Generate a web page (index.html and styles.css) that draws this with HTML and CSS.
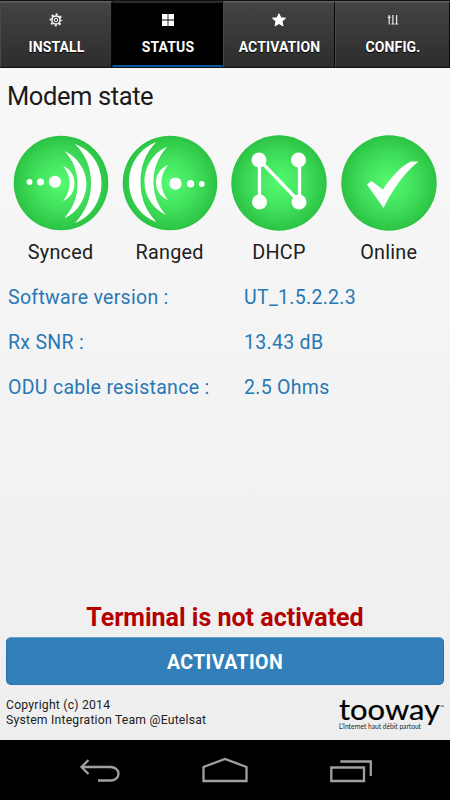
FILE: index.html
```html
<!DOCTYPE html>
<html lang="en">
<head>
<meta charset="utf-8">
<title>Modem status</title>
<link rel="stylesheet" href="styles.css">
</head>
<body>
<div class="app">
  <nav class="tabs">
    <a class="tab">
      <svg class="tab-icon" viewBox="0 0 14 14"><g fill="none" stroke="#fff"><circle cx="7" cy="7" r="4.1" stroke-width="1.5"/><circle cx="7" cy="7" r="5.6" stroke-width="1.6" stroke-dasharray="2 2.398" stroke-dashoffset="1"/><circle cx="7" cy="7" r="1.7" stroke-width="1"/></g></svg>
      <span>INSTALL</span>
    </a>
    <a class="tab active">
      <svg class="tab-icon" viewBox="0 0 14 14"><path fill="#fff" d="M1 1h5.600v5.600H1zM7.400 1H13v5.600H7.400zM1 7.400h5.600V13H1zM7.400 7.400H13V13H7.400z"/></svg>
      <span>STATUS</span>
    </a>
    <a class="tab">
      <svg class="tab-icon" viewBox="0 0 14 14"><path fill="#fff" stroke="#fff" stroke-linejoin="round" d="M7 .7l1.8 4.1 4.7.4-3.5 3.1 1 4.6L7 10.5l-4 2.400 1-4.600L.5 5.200l4.700-.4z"/></svg>
      <span>ACTIVATION</span>
    </a>
    <a class="tab">
      <svg class="tab-icon" viewBox="0 0 14 14"><path fill="none" stroke="#e8e8e8" stroke-width="1.2" d="M3.2 2v9.500M6.900 2v9.500M10.600 2v9.500M1.700 4.300h3M5.400 11h3M9.100 11h3"/></svg>
      <span>CONFIG.</span>
    </a>
  </nav>
  <main class="content">
    <h1>Modem state</h1>
    <div class="states">
      <div class="state">
        <svg viewBox="0 0 96 96">
          <defs><radialGradient id="green"><stop offset="0" stop-color="#54fb70"/><stop offset=".55" stop-color="#41e05c"/><stop offset="1" stop-color="#2cc344"/></radialGradient></defs>
          <circle cx="48" cy="48" r="47.3" fill="url(#green)"/>
          <g fill="#fff"><circle cx="16.500" cy="47" r="2.900"/><circle cx="27.500" cy="47" r="3.600"/><circle cx="42" cy="46.800" r="6.100"/>
          <path d="M50 31C57 34 61.500 40 61.500 48C61.500 57 57 63 50 66C54 61 56.500 55 56.500 48C56.500 41 54 36 50 31z"/>
          <path d="M51.500 16C64 22 73 34 73.500 49C73 64 64 78 51.500 83C60 73 64.500 62 64.500 49C64.500 36 60 25 51.500 16z"/>
          <path d="M62 9C78 15 88.500 30 88.500 48C88.500 66 78 82 62 88C73 76 78 63 78 48C78 33 73 20 62 9z"/></g>
        </svg>
        <span>Synced</span>
      </div>
      <div class="state">
        <svg viewBox="0 0 96 96">
          <circle cx="48" cy="48" r="47.300" fill="url(#green)"/>
          <g fill="#fff"><circle cx="79.700" cy="49" r="2.900"/><circle cx="68.500" cy="48.700" r="3.700"/><circle cx="53.500" cy="48.700" r="6.200"/>
          <path d="M46 30C39 33 34 39 34 47.500C34 56 39 62 46 65C42 60 39.500 54 39.500 47.500C39.500 41 42 35 46 30z"/>
          <path d="M45 12C32 17 22.500 31 22.500 47C22.500 62 32 74 44 80C35 70 31.500 59 31.500 46C31.500 34 36 22 45 12z"/>
          <path d="M34.500 7C18 13 7 29 7 47C7 65 18 81 34.500 87C23 75 18.500 62 18.500 47C18.500 32 23 18 34.500 7z"/></g>
        </svg>
        <span>Ranged</span>
      </div>
      <div class="state">
        <svg viewBox="0 0 96 96"><circle cx="48" cy="48" r="47.700" fill="url(#green)"/><path d="M28.500 67V25L68.500 67V25" fill="none" stroke="#fff" stroke-width="3.300"/><g fill="#fff"><circle cx="28" cy="25" r="7.500"/><circle cx="67.500" cy="25" r="7.500"/><circle cx="28.500" cy="67" r="7.500"/><circle cx="68" cy="67" r="7.500"/></g></svg>
        <span>DHCP</span>
      </div>
      <div class="state">
        <svg viewBox="0 0 96 96"><circle cx="48" cy="48" r="47.700" fill="url(#green)"/><path d="M26 49.500L30.500 46L42 54.500C51 41 60 31 70 26.500H77.500C63 38 52 54 42.500 73z" fill="#fff"/></svg>
        <span>Online</span>
      </div>
    </div>
    <dl class="readings">
      <dt>Software version :</dt><dd>UT_1.5.2.2.3</dd>
      <dt>Rx SNR :</dt><dd>13.43 dB</dd>
      <dt>ODU cable resistance :</dt><dd>2.5 Ohms</dd>
    </dl>
    <div class="bottom">
      <p class="warning">Terminal is not activated</p>
      <button class="activate">ACTIVATION</button>
      <footer>
        <p class="copyright">Copyright (c) 2014<br>System Integration Team @Eutelsat</p>
        <svg class="logo" viewBox="0 0 108 36">
          <text class="brand" x="1" y="22.500" textLength="101" lengthAdjust="spacingAndGlyphs">tooway</text>
          <text class="tagline" x="1" y="31.800" textLength="82" lengthAdjust="spacingAndGlyphs">L'Internet haut débit partout</text>
          <text class="tm" x="102" y="12" textLength="4" lengthAdjust="spacingAndGlyphs">™</text>
        </svg>
      </footer>
    </div>
  </main>
  <div class="navbar">
    <svg viewBox="0 0 46 26"><path d="M12.500 3L5.500 10l7 7M5.500 10h29c4.500 0 8 3 8 6.800s-3.500 6.700-8 6.700H22"/></svg>
    <svg viewBox="0 0 46 26"><path d="M1.500 24V10L23 2l21.500 8v14z"/></svg>
    <svg viewBox="0 0 46 26"><path d="M3.300 10.500H36V24H3.300zM12.300 4.500h30.500v14.500"/></svg>
  </div>
</div>
</body>
</html>
```
FILE: styles.css
```css
* { box-sizing: border-box; }
body { margin: 0; font-family: Roboto, "Liberation Sans", sans-serif; }
p, h1, dl, dd { margin: 0; }
svg { display: block; }
.app { width: 450px; height: 800px; display: flex; flex-direction: column; background: linear-gradient(#f9f9f9, #eee 740px); }
.tabs { height: 68px; flex: none; display: grid; grid-template-columns: 112px 111px 112px 115px; background: #111; padding-top: 1px; }
.tab { display: flex; flex-direction: column; align-items: center; padding-top: 10px; height: 66px; color: #fff; font-size: 14px; font-weight: 700; text-shadow: 0 1px 1px #000; background: linear-gradient(#434343, #2d2d2d); border-top: 2px solid #585858; border-right: 1px solid #080808; border-left: 1px solid #484848; }
.tab.active { background: #000; border-color: #2c2c2c #000 #075a9f; border-bottom: 2px solid #075a9f; }
.tab-icon { width: 14px; height: 14px; }
.tab span { margin-top: 10px; padding-left: 1px; line-height: 20px; letter-spacing: .1px; white-space: nowrap; }
.content { flex: 1; display: flex; flex-direction: column; padding: 10px 6px 0; }
h1 { font-size: 25.5px; font-weight: 400; line-height: 36px; color: #1b1b1b; letter-spacing: -.4px; padding-left: 1px; }
.states { display: grid; grid-template-columns: 109.200px 109px 109.500px 110px; margin-top: 21px; }
.state { display: flex; flex-direction: column; align-items: center; font-size: 19.800px; letter-spacing: .25px; color: #202020; line-height: 28px; }
.state svg { width: 96px; height: 96px; margin-bottom: 8px; }
.readings { display: grid; grid-template-columns: 236px 1fr; grid-auto-rows: 45px; padding-left: 2px; margin-top: 8px; font-size: 19.500px; letter-spacing: .3px; line-height: 45px; color: #2878b5; }
.bottom { margin-top: auto; }
.warning { text-align: center; font-size: 25px; font-weight: 700; line-height: 30px; color: #b40000; white-space: nowrap; }
.activate { display: block; width: 438px; height: 48px; margin-top: 4px; border: 1px solid #2872aa; border-top-color: #6aa0cc; border-radius: 5px; background: #337fb9; color: #fff; font: 700 19.500px/46px Roboto, sans-serif; letter-spacing: .4px; padding: 2px 0 0; }
footer { display: flex; justify-content: space-between; height: 55px; padding-top: 12px; }
.copyright { font-size: 12.200px; letter-spacing: .22px; line-height: 15px; color: #222; white-space: nowrap; padding-top: 1px; }
.logo { width: 108px; height: 36px; margin-right: -2px; overflow: visible; }
.brand { font: 400 28px Lato, sans-serif; stroke: #000; stroke-width: .2px; }
.tagline { font: 7px Lato, sans-serif; fill: #222; }
.tm { font: 5px Lato, sans-serif; }
.navbar { height: 60px; flex: none; background: #000; display: flex; justify-content: center; gap: 80px; align-items: center; }
.navbar svg { height: 26px; width: 46px; fill: none; stroke: #a0a0a0; stroke-width: 2.300px; }
```
